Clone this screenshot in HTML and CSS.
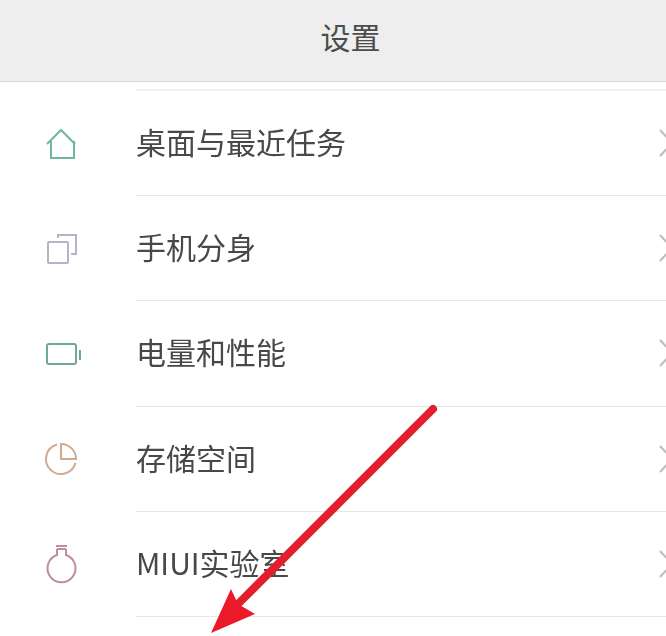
FILE: index.html
```html
<!DOCTYPE html>
<html lang="zh">
<head>
<meta charset="utf-8">
<title>设置</title>
<link rel="stylesheet" href="styles.css">
</head>
<body>
<div class="screen">
  <header class="header">设置</header>
  <div class="top-gap"><div class="top-line"></div></div>
  <ul class="list">
    <li class="row">
      <div class="icon-cell"><svg class="icon teal" viewBox="0 0 40 40"><path d="M6 20 20 6l14 14M10 17v17h23V17"/></svg></div>
      <div class="row-body"><span class="label">桌面与最近任务</span><svg class="chevron" viewBox="0 0 14 28"><path d="M1 1l12 13L1 27"/></svg></div>
    </li>
    <li class="row">
      <div class="icon-cell"><svg class="icon purple" viewBox="0 0 40 40"><rect x="7" y="13" width="20" height="21" rx="1"/><path d="M17 9V6h18v19h-5"/></svg></div>
      <div class="row-body"><span class="label">手机分身</span><svg class="chevron" viewBox="0 0 14 28"><path d="M1 1l12 13L1 27"/></svg></div>
    </li>
    <li class="row">
      <div class="icon-cell"><svg class="icon green" viewBox="0 0 40 40"><rect x="6" y="10" width="29" height="20" rx="2"/><path d="M39 16v10"/></svg></div>
      <div class="row-body"><span class="label">电量和性能</span><svg class="chevron" viewBox="0 0 14 28"><path d="M1 1l12 13L1 27"/></svg></div>
    </li>
    <li class="row">
      <div class="icon-cell"><svg class="icon tan" viewBox="0 0 40 40"><path d="M16 5.54A15 15 0 1 0 34.46 24"/><path d="M20 5v15h15A15 15 0 0 0 20 5z"/></svg></div>
      <div class="row-body"><span class="label">存储空间</span><svg class="chevron" viewBox="0 0 14 28"><path d="M1 1l12 13L1 27"/></svg></div>
    </li>
    <li class="row">
      <div class="icon-cell"><svg class="icon rose" viewBox="0 0 40 40"><path d="M15 2h11M16 5h9M16 5v6a14 14 0 1 0 9 0V5"/></svg></div>
      <div class="row-body"><span class="label">MIUI实验室</span><svg class="chevron" viewBox="0 0 14 28"><path d="M1 1l12 13L1 27"/></svg></div>
    </li>
  </ul>
  <svg class="arrow" viewBox="0 0 666 636">
    <path class="arrow-line" d="M433 409 238 604"/>
    <path class="arrow-head" d="M231 589 238 604 255 614 211 633z"/>
  </svg>
</div>
</body>
</html>
```
FILE: styles.css
```css
html, body {
  margin: 0;
  padding: 0;
  background: #fff;
}

.screen {
  position: relative;
  width: 666px;
  height: 636px;
  overflow: hidden;
  font-family: "Noto Sans CJK SC", "Noto Sans", sans-serif;
  color: #484848;
  filter: blur(0.4px);
}

.header {
  height: 81px;
  line-height: 72px;
  background: #eeeeee;
  border-bottom: 1px solid #d6d6d6;
  text-align: center;
  font-size: 30px;
  padding-left: 35px;
  color: #4c4c4c;
}

.top-gap {
  height: 9px;
  padding-left: 136px;
  display: flex;
  align-items: flex-end;
}

.top-line {
  flex: 1;
  height: 2px;
  background: #efefef;
}

.list {
  list-style: none;
  margin: 0;
  padding: 0;
}

.row {
  display: flex;
  height: 105.2px;
  font-size: 30px;
}

.icon-cell {
  width: 136px;
  padding-right: 14px;
  box-sizing: border-box;
  display: flex;
  align-items: center;
  justify-content: center;
}

.icon {
  width: 40px;
  height: 40px;
  fill: none;
  stroke-width: 2;
}

.teal { stroke: #6fb5a6; }
.purple { stroke: #b9b0cb; }
.green { stroke: #6ea79b; }
.tan { stroke: #d0aa8e; }
.rose { stroke: #bf8d9d; }

.row-body {
  flex: 1;
  display: flex;
  align-items: center;
  justify-content: space-between;
  border-bottom: 1px solid #e6e6e6;
  overflow: hidden;
}

.label {
  margin-bottom: 4px;
}

.chevron {
  width: 14px;
  height: 28px;
  margin-right: -7px;
  fill: none;
  stroke: #bcbcbc;
  stroke-width: 2;
  flex: none;
}

.arrow {
  position: absolute;
  left: 0;
  top: 0;
  width: 666px;
  height: 636px;
  pointer-events: none;
}

.arrow-line {
  stroke: #e21f2d;
  stroke-width: 8;
  stroke-linecap: round;
  fill: none;
}

.arrow-head {
  fill: #ea1a2b;
}
```
